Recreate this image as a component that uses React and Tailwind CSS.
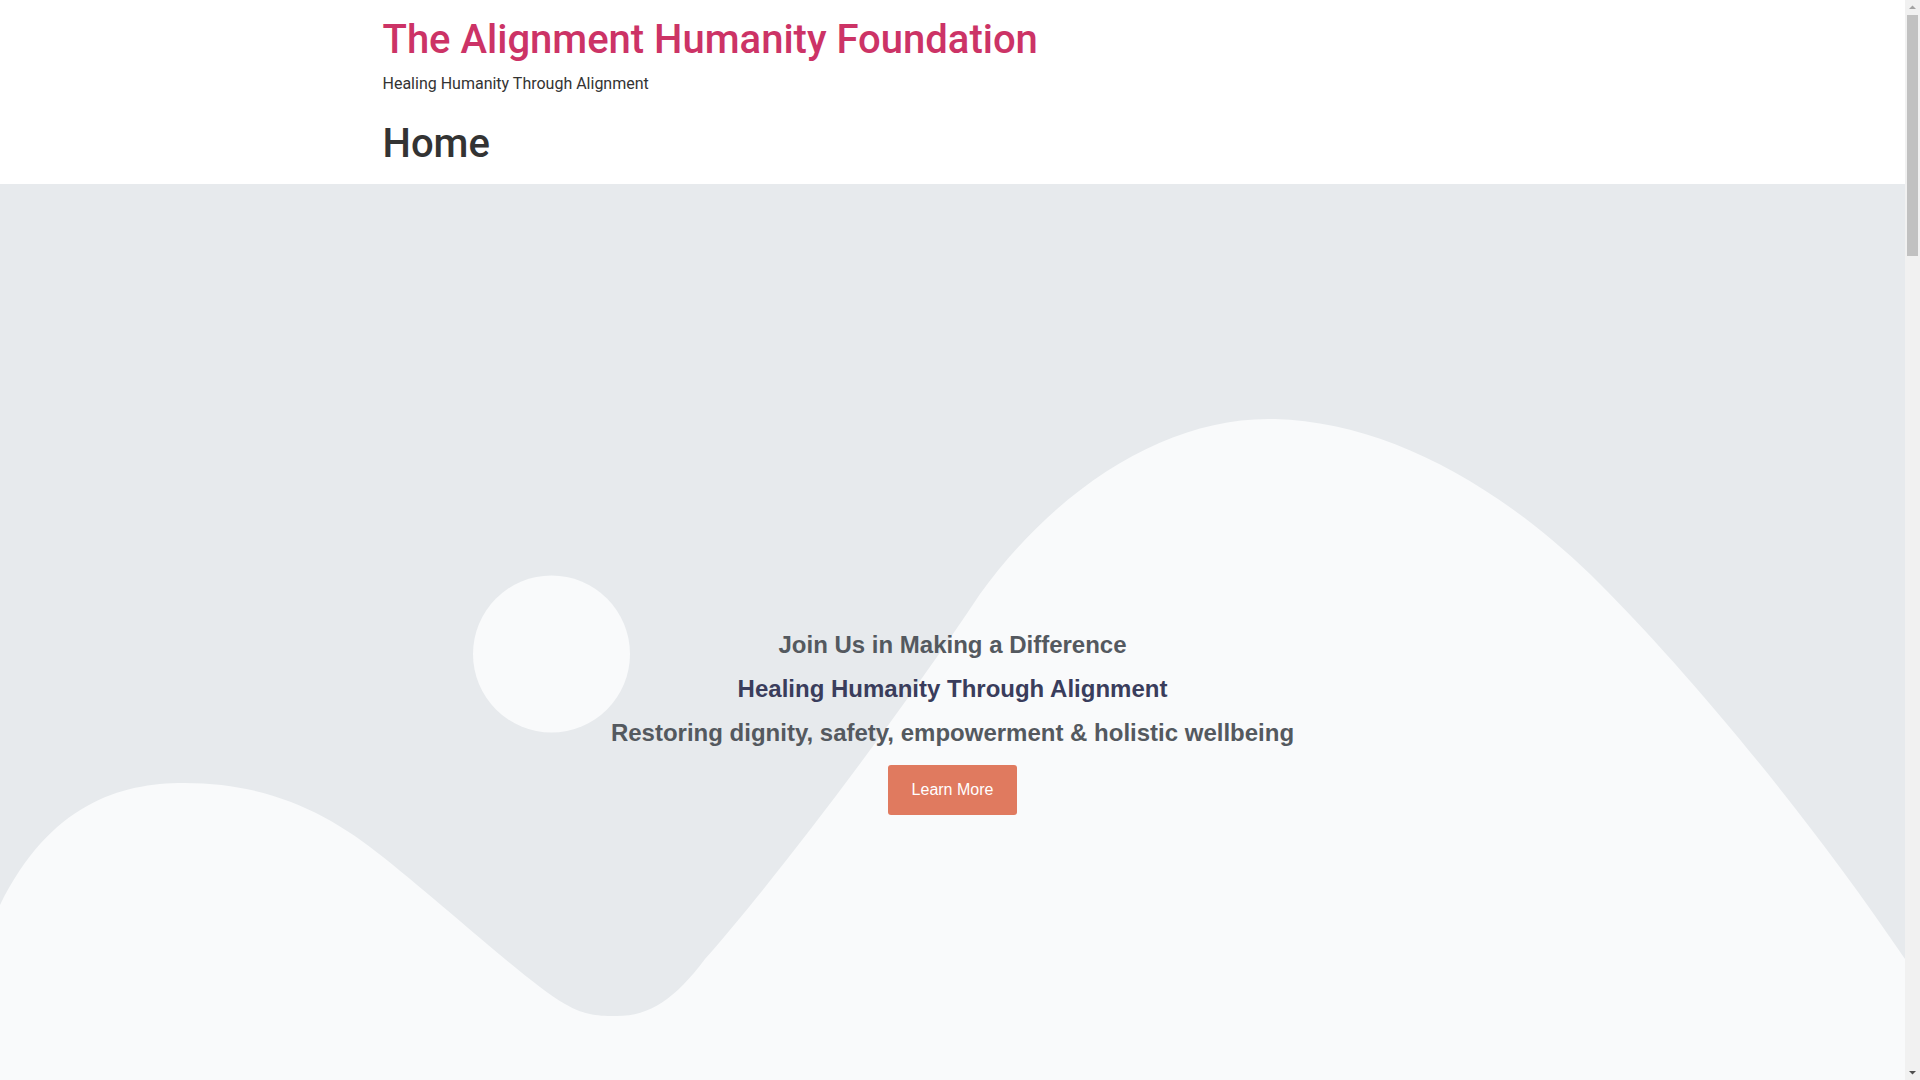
function HeroShapes() {
  return (
    <svg
      className="absolute inset-0 w-full h-full pointer-events-none"
      viewBox="0 0 1905 1080"
      preserveAspectRatio="none"
      aria-hidden="true"
    >
      {/* hills and mountain */}
      <path
        fill="#f9fafb"
        d="M0,721 C50,620 120,599 184,599 C270,599 330,630 383,673 C460,735 530,800 565,820 C585,832 600,832 617,832 C650,832 675,815 705,775 C780,690 900,530 980,410 C1060,300 1170,232 1275,235 C1385,238 1500,300 1600,400 C1680,480 1800,620 1905,775 L1905,1080 L0,1080 Z"
      />
      <circle cx="551.5" cy="470" r="78.5" fill="#f9fafb" />
    </svg>
  )
}

function ScrollTrack() {
  return (
    <div className="sticky top-0 self-start w-[15px] h-[1080px] bg-[#f1f1f1] flex flex-col items-center">
      <svg width="15" height="15" viewBox="0 0 15 15" className="shrink-0">
        <path d="M4 9 L7.5 5.5 L11 9 Z" fill="#a3a3a3" />
      </svg>
      <div className="w-[11px] h-[241px] bg-[#c1c1c1]" />
      <div className="flex-1" />
      <svg width="15" height="15" viewBox="0 0 15 15" className="shrink-0">
        <path d="M4 6 L7.5 9.5 L11 6 Z" fill="#505050" />
      </svg>
    </div>
  )
}

export default function App() {
  return (
    <div className="flex bg-white">
      <div className="w-[1905px] shrink-0 font-['Roboto',sans-serif] text-[#333333]">
        {/* Site header */}
        <header className="py-4">
          <div className="max-w-[1140px] mx-auto">
            <h1 className="text-[40px] leading-[48px] font-medium mb-2 text-[#cc3366]">
              <a href="#">The Alignment Humanity Foundation</a>
            </h1>
            <p className="text-base leading-6">Healing Humanity Through Alignment</p>
          </div>
        </header>

        <main>
          <div className="max-w-[1140px] mx-auto">
            <h1 className="text-[40px] leading-[48px] font-medium mt-2 mb-4">Home</h1>
          </div>

          {/* Hero */}
          <section className="relative h-[1080px] bg-[#e7eaed] overflow-hidden">
            <HeroShapes />
            <div className="relative h-full flex flex-col items-center justify-center pb-[10px] font-['Liberation_Sans',Arial,sans-serif] font-bold text-2xl leading-[44px] text-center">
              <h2 className="text-[#54595f]">Join Us in Making a Difference</h2>
              <h2 className="text-[#3a3d5c]">Healing Humanity Through Alignment</h2>
              <h3 className="text-[#54595f]">Restoring dignity, safety, empowerment &amp; holistic wellbeing</h3>
              <a
                href="#"
                className="mt-[10px] h-[50px] px-6 flex items-center rounded-[3px] bg-[#e07a5f] text-white text-base font-normal leading-none"
              >
                Learn More
              </a>
            </div>
          </section>
        </main>
      </div>
      <ScrollTrack />
    </div>
  )
}
